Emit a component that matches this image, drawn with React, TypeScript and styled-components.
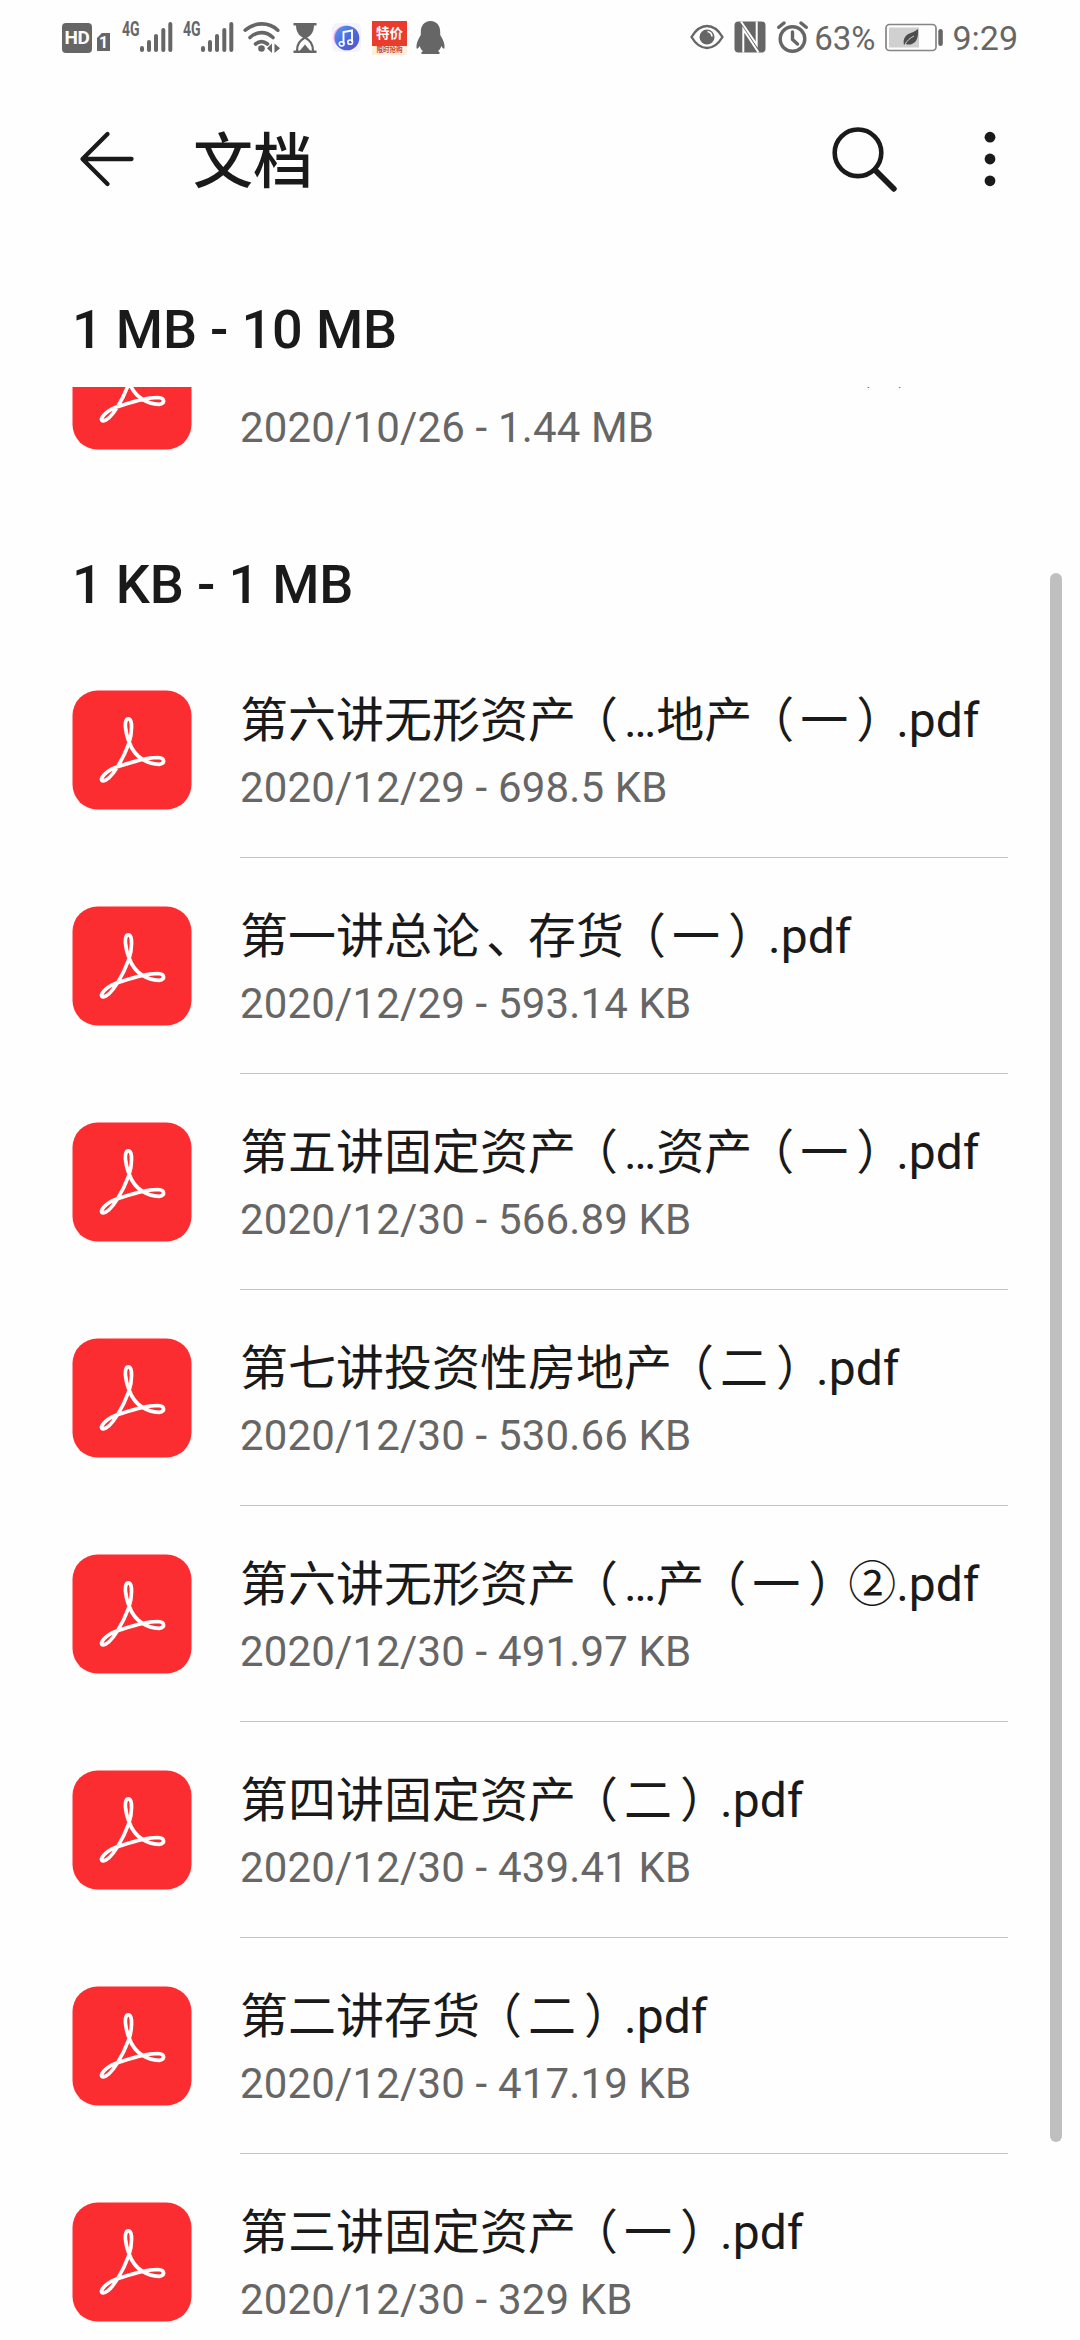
import React from "react";
import styled, { createGlobalStyle } from "styled-components";

const GlobalStyle = createGlobalStyle`
  * { box-sizing: border-box; }
  html, body { margin: 0; padding: 0; background: #fefefe; }
`;

const INK = "#1a1a1a";
const GREY = "#666666";

const Screen = styled.div`
  position: relative;
  display: flex;
  flex-direction: column;
  width: 1080px;
  height: 2340px;
  overflow: hidden;
  background: #fefefe;
  color: ${INK};
  font-family: Roboto, "Noto Sans CJK SC", sans-serif;
`;

const StatusBar = styled.div`
  display: flex;
  justify-content: space-between;
  flex: none;
  height: 75px;
  padding: 15px 62px 0 62px;
  color: ${GREY};
`;

const StatusGroup = styled.div`
  display: flex;
  align-items: flex-start;
  height: 45px;
`;

const Glyph = styled.svg<{ $gap?: number }>`
  display: block;
  flex: none;
  margin-left: ${(p) => p.$gap ?? 0}px;
`;

const HdBadge = styled.div`
  display: flex;
  align-items: center;
  justify-content: center;
  width: 30px;
  height: 30px;
  margin-top: 8px;
  border-radius: 4px;
  background: ${GREY};
  color: #fefefe;
  font-size: 19px;
  font-weight: 700;
  line-height: 30px;
  letter-spacing: -0.5px;
`;

const SimBadge = styled.div`
  width: 13px;
  height: 18px;
  margin: 18px 0 0 5px;
  background: ${GREY};
  clip-path: polygon(38% 0, 100% 0, 100% 100%, 0 100%, 0 28%);
  color: #fefefe;
  font-size: 16px;
  font-weight: 700;
  line-height: 19px;
  text-align: center;
`;

const NetLabel = styled.div<{ $gap: number }>`
  width: 18px;
  margin: 5px 0 0 ${(p) => p.$gap}px;
  font-size: 20px;
  font-weight: 700;
  line-height: 19px;
  white-space: nowrap;
  transform: scaleX(0.7);
  transform-origin: left;
`;

const DealBadge = styled.div`
  display: flex;
  flex-direction: column;
  align-items: center;
  width: 35px;
  height: 34px;
  margin: 6px 0 0 11px;
  overflow: hidden;
  background: linear-gradient(#ea3b2c 0 25px, #fdf0dc 25px);
`;

const DealTitle = styled.span`
  height: 25px;
  color: #fff;
  font-size: 13.5px;
  font-weight: 700;
  line-height: 25px;
`;

const DealCaption = styled.span`
  color: #c8412c;
  font-size: 6.5px;
  font-weight: 700;
  line-height: 8px;
  white-space: nowrap;
`;

const StatusText = styled.div<{ $size: number; $gap: number }>`
  margin-left: ${(p) => p.$gap}px;
  font-size: ${(p) => p.$size}px;
  line-height: 47px;
  white-space: nowrap;
`;

const AppBar = styled.header`
  display: flex;
  align-items: center;
  flex: none;
  height: 168px;
  padding: 0 84px 0 78px;
`;

const Title = styled.h1`
  flex: 1;
  margin: 8px 0 0 57px;
  font-size: 60px;
  font-weight: 500;
  line-height: 80px;
`;

const SectionHeader = styled.h2`
  flex: none;
  height: 144px;
  margin: 0;
  padding: 55px 72px 0;
  background: #fefefe;
  font-size: 54px;
  font-weight: 500;
  line-height: 64px;
  letter-spacing: -0.15px;
`;

const ListViewport = styled.main`
  flex: 1;
  min-height: 0;
  overflow: hidden;
`;

const ScrolledList = styled.div`
  margin-top: -105px;
`;

const Row = styled.div`
  display: flex;
  height: 216px;
  padding-left: 72px;
`;

const FileIcon = styled.svg`
  display: block;
  flex: none;
  width: 120px;
  height: 120px;
  margin: 48px 48px 0 0;
`;

const RowBody = styled.div<{ $divider: boolean }>`
  width: 768px;
  padding-top: 44px;
  border-bottom: 1px solid ${(p) => (p.$divider ? "#c4c4c4" : "transparent")};
`;

const FileName = styled.div`
  height: 70px;
  font-size: 48px;
  line-height: 70px;
  white-space: nowrap;
`;

const Meta = styled.div`
  height: 50px;
  margin-top: 7px;
  color: ${GREY};
  font-size: 42px;
  line-height: 50px;
  letter-spacing: 0.15px;
  white-space: nowrap;
`;

const Punct = styled.span<{ $inset: number }>`
  display: inline-block;
  width: 48px;
  padding-left: ${(p) => p.$inset}px;
  font-family: "Noto Sans CJK SC", sans-serif;
  font-feature-settings: "halt";
  line-height: 60px;
`;

const ScrollThumb = styled.div`
  position: absolute;
  top: 573px;
  right: 18px;
  width: 12px;
  height: 1569px;
  border-radius: 6px;
  background: #bfbfbf;
`;

const SignalBars = () => (
  <Glyph width="33" height="45" viewBox="0 0 33 45" stroke={GREY} strokeWidth="4" strokeLinecap="round">
    <path d="M2 33v2M9 27v8M16 21v14M23.3 15v20M30.3 9v26" />
  </Glyph>
);

const Wifi = () => (
  <Glyph $gap={9} width="40" height="45" viewBox="0 0 40 45" fill="none" stroke={GREY} strokeWidth="3.6" strokeLinecap="round">
    <path d="M2.2 15.2C12 6.800 26 6.800 34.800 15.200M7 22.500C14 16 23 16 30 22.500M12.500 29C16.500 25.800 20.500 25.800 24.500 29" />
    <circle cx="18.500" cy="33.500" r="3.300" fill={GREY} stroke="none" />
    <path d="M29 28.500v9.500l-5-4.800zM31.500 28.500v9.500l5.500-4.800z" fill={GREY} stroke="none" />
  </Glyph>
);

const Hourglass = () => (
  <Glyph $gap={10} width="24" height="45" viewBox="0 0 24 45" fill={GREY}>
    <path d="M0.500 8h23v2.600h-23zM0.500 35.500h23v2.600h-23z" />
    <path d="M3 10h18c0 7-3 10.500-7.500 13h-3C6 20.500 3 17 3 10z" />
    <path d="M4 36c0-7.500 3-10.500 8-13.500 5 3 8 6 8 13.500" fill="none" stroke={GREY} strokeWidth="2.200" />
    <path d="M6.500 36l5.500-6.500 5.500 6.500z" />
  </Glyph>
);

const Music = () => (
  <Glyph $gap={15} width="29" height="45" viewBox="0 0 29 45">
    <defs>
      <linearGradient id="disc" x1="0" y1="0" x2="1" y2="1">
        <stop offset="0" stopColor="#5a9bf0" />
        <stop offset="0.500" stopColor="#4a6be0" />
        <stop offset="1" stopColor="#5a50c8" />
      </linearGradient>
    </defs>
    <rect x="0" y="8" width="29" height="29" rx="5" fill="#f5f3fb" />
    <circle cx="13.500" cy="22.500" r="12" fill="#e9a6e8" />
    <circle cx="15" cy="23" r="12.300" fill="url(#disc)" />
    <path d="M11.500 28.500V17l8.500-1.500v11.500" fill="none" stroke="#fff" strokeWidth="1.900" />
    <ellipse cx="9.700" cy="28.800" rx="2.400" ry="2.100" fill="none" stroke="#fff" strokeWidth="1.500" />
    <ellipse cx="18.200" cy="27.200" rx="2.400" ry="2.100" fill="none" stroke="#fff" strokeWidth="1.500" />
  </Glyph>
);

const Penguin = () => (
  <Glyph $gap={9} width="29" height="45" viewBox="0 0 29 45" fill={GREY}>
    <path d="M14.500 6C8 6 4.800 11 4.800 17v3C2 24 0 29 0.500 33c0.300 1.500 1.700 0.500 3.200-2 0.500 2.200 1.700 3.800 3.300 5.200-2 0.600-2.700 2.800 0 2.800h15c2.700 0 2-2.200 0-2.800 1.600-1.400 2.800-3 3.300-5.200 1.500 2.500 2.900 3.500 3.200 2 0.500-4-1.500-9-4.300-13v-3C24.200 11 21 6 14.500 6z" />
  </Glyph>
);

const Eye = () => (
  <Glyph width="34" height="45" viewBox="0 0 34 45" fill="none" stroke={GREY} strokeWidth="2.400">
    <path d="M1.500 22C6 14.500 11 11 17 11s11 3.500 15.500 11C28 29.500 23 33 17 33S6 29.500 1.500 22z" strokeLinejoin="round" />
    <circle cx="17" cy="22" r="7.500" fill={GREY} stroke="none" />
    <path d="M17.500 16.500a5.500 5.500 0 0 1 4.500 5" stroke="#fefefe" strokeWidth="1.600" />
  </Glyph>
);

const Nfc = () => (
  <Glyph $gap={10} width="32" height="45" viewBox="0 0 32 45">
    <rect x="0.500" y="6.500" width="31" height="31" rx="4" fill={GREY} />
    <path d="M9.300 37.500V14.500L24.500 37.500M7 6.500L22.700 29.500V6.500" fill="none" stroke="#fefefe" strokeWidth="2" />
  </Glyph>
);

const Alarm = () => (
  <Glyph $gap={11} width="31" height="45" viewBox="0 0 31 45" fill="none" stroke={GREY} strokeWidth="3.400" strokeLinecap="round">
    <circle cx="15.500" cy="24" r="12.300" />
    <path d="M15.500 17v7.500l5 4.500" />
    <path d="M1.800 12.300L7 8M29.200 12.300L24 8" />
  </Glyph>
);

const Battery = () => (
  <Glyph $gap={10} width="59" height="45" viewBox="0 0 59 45">
    <rect x="1" y="9.500" width="50" height="26" rx="3.500" fill="none" stroke="#858585" strokeWidth="1.700" />
    <rect x="4" y="12.500" width="30" height="20" fill="#d0d0d0" />
    <path d="M33 14c0.500 8-1 13-6 15-2.500 1-5 0.700-6.500-0.300l-1.500 1.300c-1-4 0-8 3.500-10.500C25.500 17.500 30 17 33 14z" fill="#4d4d4d" />
    <path d="M20 29.500c2-4 5-6.500 9-8.500" stroke="#d0d0d0" strokeWidth="1" fill="none" />
    <rect x="53.300" y="14" width="4.500" height="17" rx="2.200" fill={GREY} />
  </Glyph>
);

const Back = () => (
  <Glyph width="58" height="58" viewBox="0 0 58 58" fill="none" stroke={INK} strokeWidth="4.300" strokeLinecap="round" strokeLinejoin="round">
    <path d="M53.500 29H5M29.500 4L4.500 29l25 25" />
  </Glyph>
);

const Search = () => (
  <Glyph width="68" height="68" viewBox="0 0 68 68" fill="none" stroke={INK}>
    <circle cx="27" cy="27.800" r="23.300" strokeWidth="4.600" />
    <path d="M44 45l18.800 18.800" strokeWidth="5.800" strokeLinecap="round" />
  </Glyph>
);

const More = () => (
  <Glyph $gap={85} width="12" height="68" viewBox="0 0 12 68" fill={INK}>
    <circle cx="6" cy="12.200" r="5.400" />
    <circle cx="6" cy="34" r="5.400" />
    <circle cx="6" cy="55.800" r="5.400" />
  </Glyph>
);

const PdfIcon = () => (
  <FileIcon viewBox="0 0 120 120">
    <rect x="0.500" y="0.500" width="119" height="119" rx="25" fill="#fc2d30" />
    <path
      d="M57.500 53C53 42 51.500 28.900 56.500 28.900C61 28.900 60 44 57 53C52 67 40 90 31 91C26 90 34 79.500 48 76C62 71.500 74 67.500 86 67.500C93 67.800 93.500 73.500 87 74.300C76 74 63 68 57.500 53Z"
      fill="none"
      stroke="#fff"
      strokeWidth="3.700"
      strokeLinejoin="round"
    />
  </FileIcon>
);

type FileEntry = { name: string; date: string; size: string };

const LARGE: FileEntry[] = [
  { name: "第三讲固定资产投资性…产20(1).pdf", date: "2020/10/26", size: "1.44 MB" },
];

const SMALL: FileEntry[] = [
  { name: "第六讲无形资产（…地产（一）.pdf", date: "2020/12/29", size: "698.5 KB" },
  { name: "第一讲总论、存货（一）.pdf", date: "2020/12/29", size: "593.14 KB" },
  { name: "第五讲固定资产（…资产（一）.pdf", date: "2020/12/30", size: "566.89 KB" },
  { name: "第七讲投资性房地产（二）.pdf", date: "2020/12/30", size: "530.66 KB" },
  { name: "第六讲无形资产（…产（一）②.pdf", date: "2020/12/30", size: "491.97 KB" },
  { name: "第四讲固定资产（二）.pdf", date: "2020/12/30", size: "439.41 KB" },
  { name: "第二讲存货（二）.pdf", date: "2020/12/30", size: "417.19 KB" },
  { name: "第三讲固定资产（一）.pdf", date: "2020/12/30", size: "329 KB" },
];

/* Left inset of each full-width punctuation mark inside its 48px cell. */
const PUNCT_INSET: Record<string, number> = { "（": 18, "）": 8, "、": 6 };

const renderName = (name: string) =>
  name.split(/([（）、])/).map((part, i) =>
    part in PUNCT_INSET ? (
      <Punct key={i} $inset={PUNCT_INSET[part]}>{part}</Punct>
    ) : (
      part
    )
  );

const FileRow = ({ file, divider = true }: { file: FileEntry; divider?: boolean }) => (
  <Row>
    <PdfIcon />
    <RowBody $divider={divider}>
      <FileName>{renderName(file.name)}</FileName>
      <Meta>{file.date} - {file.size}</Meta>
    </RowBody>
  </Row>
);

export default function App() {
  return (
    <Screen>
      <GlobalStyle />
      <StatusBar>
        <StatusGroup>
          <HdBadge>HD</HdBadge>
          <SimBadge>1</SimBadge>
          <NetLabel $gap={12}>4G</NetLabel>
          <SignalBars />
          <NetLabel $gap={10}>4G</NetLabel>
          <SignalBars />
          <Wifi />
          <Hourglass />
          <Music />
          <DealBadge>
            <DealTitle>特价</DealTitle>
            <DealCaption>限时抢购</DealCaption>
          </DealBadge>
          <Penguin />
        </StatusGroup>
        <StatusGroup>
          <Eye />
          <Nfc />
          <Alarm />
          <StatusText $size={33} $gap={6}>63%</StatusText>
          <Battery />
          <StatusText $size={34} $gap={8}>9:29</StatusText>
        </StatusGroup>
      </StatusBar>
      <AppBar>
        <Back />
        <Title>文档</Title>
        <Search />
        <More />
      </AppBar>
      <SectionHeader>1 MB - 10 MB</SectionHeader>
      <ListViewport>
        <ScrolledList>
          {LARGE.map((f) => (
            <FileRow key={f.name} file={f} divider={false} />
          ))}
          <SectionHeader>1 KB - 1 MB</SectionHeader>
          {SMALL.map((f) => (
            <FileRow key={f.name} file={f} />
          ))}
        </ScrolledList>
      </ListViewport>
      <ScrollThumb />
    </Screen>
  );
}
